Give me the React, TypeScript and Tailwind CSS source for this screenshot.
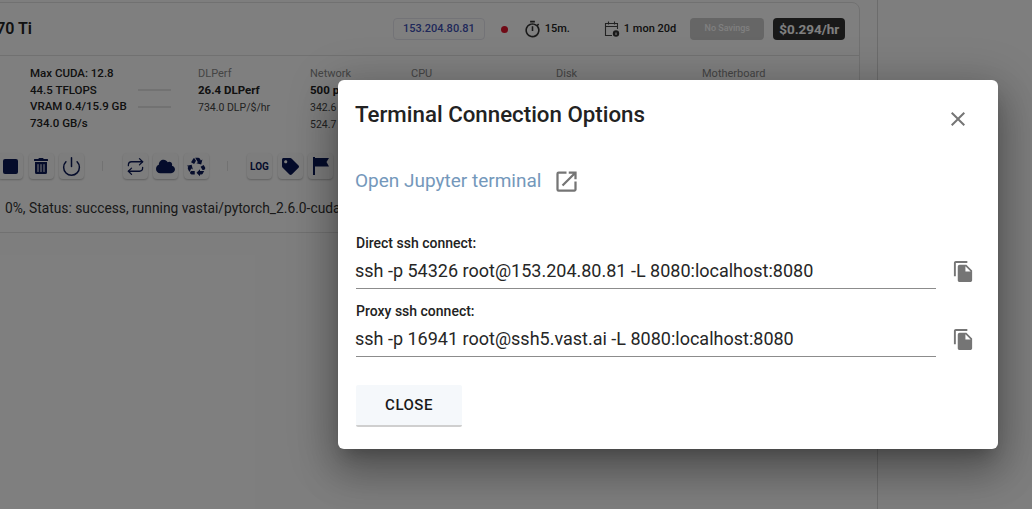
import type { ReactNode } from "react";
import {
  MdClose,
  MdFileCopy,
  MdOpenInNew,
  MdOutlineTimer,
  MdRecycling,
} from "react-icons/md";
import { FaCloud, FaTag, FaTrashAlt } from "react-icons/fa";
import { Power, Repeat } from "lucide-react";

function ActionButton({ children }: { children: ReactNode }) {
  return (
    <div className="flex h-[26px] w-[25px] items-center justify-center rounded-[4px] bg-[#fafafa] text-[#0b1957] shadow-[0_1px_2px_rgba(0,0,0,0.25)]">
      {children}
    </div>
  );
}

function Spec({ label, lines, width }: { label: string; lines: string[]; width: string }) {
  return (
    <div className={`${width} shrink-0 pt-px`}>
      <div className="text-[11px] leading-[16px] text-[#8a8a8a]">{label}</div>
      {lines.slice(0, 1).map((l) => (
        <div key={l} className="text-[11.5px] font-bold leading-[17px] text-[#222]">
          {l}
        </div>
      ))}
      {lines.slice(1).map((l) => (
        <div key={l} className="text-[10.5px] leading-[17px] text-[#444]">
          {l}
        </div>
      ))}
    </div>
  );
}

function CalendarIcon() {
  return (
    <svg width="18" height="18" viewBox="0 0 18 18" fill="none" stroke="#444" strokeWidth="1.1">
      <path d="M9 15.5H2.5v-12h12V9" />
      <path d="M2.5 6.5h12M5.5 1.5v3M11.5 1.5v3" />
      <circle cx="13" cy="13.5" r="3.2" fill="#333" stroke="none" />
      <path d="M13 12.5v2.5" stroke="#fff" strokeWidth="1" />
    </svg>
  );
}

function FlagIcon() {
  return (
    <svg width="18" height="20" viewBox="0 0 18 20" fill="currentColor">
      <path d="M1 1h2v18H1z" />
      <path d="M3 2h14l-2.5 4L17 10.500H3z" />
    </svg>
  );
}

function SshField({ label, value }: { label: string; value: string }) {
  return (
    <div className="flex items-end">
      <div className="w-[580px]">
        <div className="text-[14px] font-medium leading-[20px] text-[#222]">{label}</div>
        <div className="mt-[3px] h-[33px] border-b border-[#8c8c8c] text-[18px] leading-[30px] text-[#262626]">
          <span className="-ml-px">{value}</span>
        </div>
      </div>
      <MdFileCopy className="mb-[6px] ml-[16px] text-[#757575]" size={23} />
    </div>
  );
}

export default function App() {
  return (
    <div className="relative h-[509px] w-[1032px] overflow-hidden bg-[#fdfdfd] font-['Roboto',sans-serif]">
      <div className="flex h-full">
        <div className="w-[878px] shrink-0 border-r border-[#d8d8d8] pt-[2px]">
          <div className="-ml-[130px] h-[231px] w-[990px] rounded-[8px] border border-[#e2e2e2] bg-white">
            <div className="flex h-[53px] items-center whitespace-nowrap border-b border-[#e2e2e2]">
              <div className="w-[161px] shrink-0 text-right text-[16px] font-semibold text-[#222]">
                1x RTX 4070 Ti
              </div>
              <div className="ml-[361px] rounded-[4px] border border-[#e6e6ee] px-[9px] py-[2px] text-[11px] font-medium text-[#3f51b5]">
                153.204.80.81
              </div>
              <div className="ml-[16px] h-[7px] w-[7px] rounded-full bg-[#e0142c]" />
              <MdOutlineTimer className="ml-[15px] text-[#333]" size={19} />
              <div className="ml-[3px] text-[11px] font-medium text-[#222]">15m.</div>
              <div className="ml-[33px]">
                <CalendarIcon />
              </div>
              <div className="ml-[3px] text-[11px] font-medium text-[#222]">1 mon 20d</div>
              <div className="ml-[14px] flex h-[22px] w-[74px] items-center justify-center rounded-[4px] bg-[#cccccc] text-[9px] font-medium text-white">
                No Savings
              </div>
              <div className="ml-[9px] flex h-[22px] w-[72px] items-center justify-center rounded-[4px] bg-[#333333] text-[13.5px] font-bold text-white">
                $0.294/hr
              </div>
            </div>

            <div className="flex pl-[159px] pt-[9px]">
              <div className="w-[108px] shrink-0 text-[11.5px] font-medium leading-[16.7px] text-[#222]">
                <div>Max CUDA: 12.8</div>
                <div>44.5 TFLOPS</div>
                <div>VRAM 0.4/15.9 GB</div>
                <div>734.0 GB/s</div>
              </div>
              <div className="w-[60px] shrink-0 pt-[24px]">
                <div className="h-[2px] w-[33px] bg-[#e4e4e4]" />
                <div className="mt-[15px] h-[2px] w-[33px] bg-[#e4e4e4]" />
              </div>
              <Spec label="DLPerf" lines={["26.4 DLPerf", "734.0 DLP/$/hr"]} width="w-[112px]" />
              <Spec label="Network" lines={["500 ports", "342.6", "524.7"]} width="w-[101px]" />
              <Spec label="CPU" lines={[]} width="w-[145px]" />
              <Spec label="Disk" lines={[]} width="w-[146px]" />
              <Spec label="Motherboard" lines={[]} width="w-[120px]" />
            </div>

            <div className="mt-[20px] flex items-center pl-[127px]">
              <div className="flex gap-[5.5px]">
                <ActionButton>
                  <div className="h-[15px] w-[15px] rounded-[2px] bg-[#0b1957]" />
                </ActionButton>
                <ActionButton>
                  <FaTrashAlt size={16} />
                </ActionButton>
                <ActionButton>
                  <Power size={21} strokeWidth={1.7} className="shrink-0" />
                </ActionButton>
              </div>
              <div className="ml-[18px] h-[10px] w-px bg-[#e4e4e4]" />
              <div className="ml-[19.5px] flex gap-[5.5px]">
                <ActionButton>
                  <Repeat size={19} strokeWidth={1.6} />
                </ActionButton>
                <ActionButton>
                  <FaCloud size={19} />
                </ActionButton>
                <ActionButton>
                  <MdRecycling size={21} />
                </ActionButton>
              </div>
              <div className="ml-[18px] h-[10px] w-px bg-[#e4e4e4]" />
              <div className="ml-[19.5px] flex gap-[5.5px]">
                <ActionButton>
                  <span className="text-[10px] font-bold">LOG</span>
                </ActionButton>
                <ActionButton>
                  <FaTag size={17} />
                </ActionButton>
                <ActionButton>
                  <FlagIcon />
                </ActionButton>
              </div>
            </div>

            <div className="mt-[19px] whitespace-nowrap pl-[134px] text-[13.8px] text-[#333]">
              <span>0%, Status: success, running vastai/pytorch_2.6.0-cuda-12.4</span>
            </div>
          </div>
        </div>
      </div>

      <div className="absolute inset-0 bg-black/50 pl-[338px] pt-[80px]">
        <div className="h-[369px] w-[660px] rounded-[6px] bg-white pl-[18px] pt-[21px] shadow-[0_11px_15px_-7px_rgba(0,0,0,0.2),0_24px_38px_3px_rgba(0,0,0,0.2),0_9px_46px_8px_rgba(0,0,0,0.2)]">
          <div className="flex h-[28px] items-center justify-between pr-[28px]">
            <h2 className="-ml-px text-[22.3px] font-medium text-[#222]">Terminal Connection Options</h2>
            <MdClose className="mt-[8px] text-[#757575]" size={24} />
          </div>
          <div className="-ml-px mt-[37px] flex h-[30px] items-center text-[19px] text-[#7498bb]">
            Open Jupyter terminal
            <MdOpenInNew className="ml-[12px] text-[#757575]" size={27} />
          </div>
          <div className="mt-[37px] flex flex-col gap-[12px]">
            <SshField label="Direct ssh connect:" value="ssh -p 54326 root@153.204.80.81 -L 8080:localhost:8080" />
            <SshField label="Proxy ssh connect:" value="ssh -p 16941 root@ssh5.vast.ai -L 8080:localhost:8080" />
          </div>
          <button className="mt-[28px] h-[42px] w-[106px] rounded-[2px] border-b-2 border-[#cfcfcf] bg-[#f5f8fb] text-[15px] font-medium tracking-[0.5px] text-[#1a1a1a]">
            CLOSE
          </button>
        </div>
      </div>
    </div>
  );
}
